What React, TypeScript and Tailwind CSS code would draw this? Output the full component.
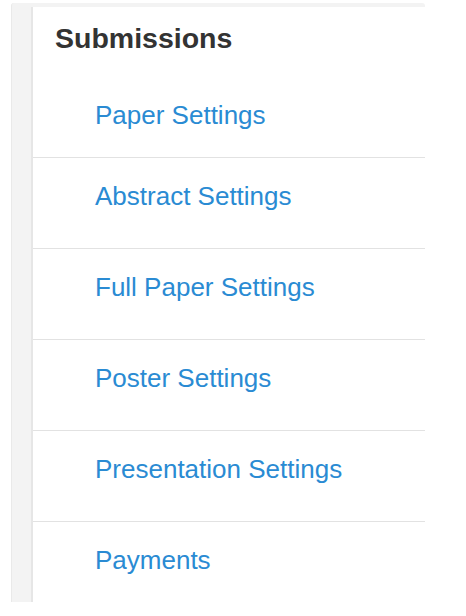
const links = [
  "Abstract Settings",
  "Full Paper Settings",
  "Poster Settings",
  "Presentation Settings",
  "Payments",
];

export default function App() {
  return (
    <div className="min-h-[616px] bg-white pl-[11px] pt-[3px] font-['Liberation_Sans',Arial,sans-serif]">
      <div className="flex h-[599px] w-[414px] overflow-hidden rounded-tl-[3px] rounded-tr-[3px] border-l border-[#e9e9e9] bg-[#f3f3f3] pt-[4px]">
        <div className="w-[19px] shrink-0" />
        <div className="flex flex-1 flex-col border-l-2 border-[#e6e6e6] bg-white">
          <div className="h-[151px] shrink-0 border-b border-[#e2e2e2]">
            <h2 className="pl-[22px] pt-[14px] text-[28.5px] font-bold leading-[34px] text-[#333333]">
              Submissions
            </h2>
            <a
              href="#"
              className="block pl-[62px] pt-[45px] text-[26px] leading-[30px] text-[#2a8bd3]"
            >
              Paper Settings
            </a>
          </div>
          {links.map((label, i) => (
            <div
              key={label}
              className={
                i < links.length - 1
                  ? "h-[91px] shrink-0 border-b border-[#e2e2e2] pl-[62px] pt-[23px]"
                  : "h-[91px] shrink-0 pl-[62px] pt-[23px]"
              }
            >
              <a href="#" className="block text-[26px] leading-[30px] text-[#2a8bd3]">
                {label}
              </a>
            </div>
          ))}
        </div>
      </div>
    </div>
  );
}
